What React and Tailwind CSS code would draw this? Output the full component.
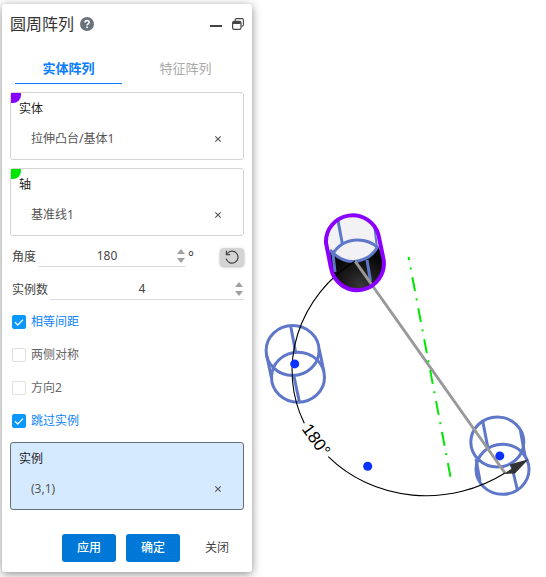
import React, { useState } from "react";

const HelpIcon = () => (
    <svg viewBox="0 0 14 14" className="h-3.5 w-3.5">
        <circle cx="7" cy="7" r="7" fill="#6a737b" />
        <path d="M5 5.6C5 4.3 5.8 3.6 7 3.6s2.1.7 2.1 1.8c0 1.5-2 1.5-2 3" fill="none" stroke="#fff" strokeWidth="1.6" />
        <rect x="6.3" y="9.5" width="1.6" height="1.6" fill="#fff" />
    </svg>
);

const RestoreIcon = () => (
    <svg viewBox="0 0 12 12" className="h-3 w-3" fill="none" stroke="#444">
        <path d="M3.2 3V2Q3.2.6 4.6.6H10Q11.4.6 11.4 2V6.8Q11.4 8.2 10 8.2H9.2" strokeWidth="1.1" />
        <rect x=".6" y="3.4" width="8.4" height="8" rx="1.6" strokeWidth="1.2" />
        <path d="M1 4.8H8.6" strokeWidth="2.4" />
    </svg>
);

const ReverseIcon = () => (
    <svg viewBox="0 0 14 14" className="h-3.5 w-3.5" fill="none" stroke="#444" strokeWidth="1.2">
        <path d="M2.2 3.6A6 6 0 1 1 1.2 8.6" />
        <path d="M1.4 .8V4.6H5.2" />
    </svg>
);

const SelectionBox = ({ label, item, color, active }) => (
    <section
        className={
            active
                ? "relative rounded-[3px] border border-[#67707a] bg-[#d5e9ff] px-2 pt-2 pb-2.5"
                : "relative rounded-[3px] border border-[#d4d4d4] bg-white px-2 pt-2 pb-2.5"
        }
    >
        {color && <span className={`absolute top-0 left-0 h-2.5 w-2.5 rounded-br-lg ${color}`} />}
        <h2 className="text-xs leading-4 text-[#222]">{label}</h2>
        <div className="mt-3 flex h-5 items-center justify-between px-3 text-xs text-[#555]">
            <span>{item}</span>
            <button aria-label={`移除 ${item}`} className="flex h-4 w-2.5 items-center justify-center">
                <svg viewBox="0 0 10 10" className="h-2.5 w-2.5" stroke="#555" strokeWidth="1.1">
                    <path d="M2.3 2.3L7.7 7.7M7.7 2.3L2.3 7.7" />
                </svg>
            </button>
        </div>
    </section>
);

const NumberField = ({ id, label, value, onChange, children }) => (
    <div className="flex h-[33px] items-center pl-0.5">
        <label htmlFor={id} className="mr-0.5 shrink-0 text-xs text-[#444]">{label}</label>
        <div className="flex h-[21px] min-w-0 flex-1 items-center border-b border-[#d9dce3]">
            <input
                id={id}
                inputMode="numeric"
                value={value}
                onChange={(e) => onChange(Number(e.target.value) || 0)}
                className="w-full min-w-0 flex-1 bg-transparent text-center text-xs text-[#444] outline-none"
            />
            <div className="flex w-2.5 flex-col items-center gap-1">
                <button aria-label={`${label} +`} onClick={() => onChange(value + 1)}>
                    <svg viewBox="0 0 10 5" className="h-[5px] w-2.5" fill="#a0a0a0"><path d="M5 0L9 5H1Z" /></svg>
                </button>
                <button aria-label={`${label} -`} onClick={() => onChange(value - 1)}>
                    <svg viewBox="0 0 10 5" className="h-[5px] w-2.5" fill="#a0a0a0"><path d="M1 0H9L5 5Z" /></svg>
                </button>
            </div>
        </div>
        {children}
    </div>
);

const Option = ({ label, defaultChecked = false }) => {
    const [checked, setChecked] = useState(defaultChecked);

    return (
        <label className="flex h-[33px] items-center gap-[5px] pb-px pl-0.5 text-xs">
            <span className="grid h-3.5 w-3.5">
                <input
                    type="checkbox"
                    checked={checked}
                    onChange={(e) => setChecked(e.target.checked)}
                    className="col-start-1 row-start-1 h-3.5 w-3.5 appearance-none rounded-[2px] border border-[#dcdde6] bg-white checked:border-[#0a98ff] checked:bg-[#0a98ff]"
                />
                {checked && (
                    <svg viewBox="0 0 14 14" className="pointer-events-none col-start-1 row-start-1 h-3.5 w-3.5" fill="none" stroke="#fff" strokeWidth="1.3">
                        <path d="M3 7.2L5.8 10L11 4.6" />
                    </svg>
                )}
            </span>
            <span className={checked ? "text-[#0a84ff]" : "text-[#666]"}>{label}</span>
        </label>
    );
};

const Scene = () => (
    <svg viewBox="252 0 294 577" className="h-auto w-full" fill="none">
        <defs>
            <radialGradient id="body" cx="361" cy="286" r="34" gradientUnits="userSpaceOnUse">
                <stop offset="0" stopColor="#383838" />
                <stop offset=".5" stopColor="#1c1c1c" />
                <stop offset="1" stopColor="#050505" />
            </radialGradient>
        </defs>

        {/* source body */}
        <path d="M326 243A26.700 26.300 0 0 1 378.500 235L383.500 259A26.500 26.500 0 0 1 331 268Z" fill="#f2f2f4" />
        <path d="M330 250Q341 262 354 261.500Q371 260 378 246L383.500 259A26.500 26.500 0 0 1 331 268Z" fill="url(#body)" />
        <g stroke="#5f77c8" strokeWidth="3">
            <path d="M337.500 218L342.300 243.500M367 260L370.500 281M333 254L335 272" />
            <path d="M374.500 228L377 248" strokeWidth="2" />
            <path d="M332 255Q341 240 357.500 240Q370 240 378 248" />
            <path d="M330 250Q341 262 354 261.500Q371 260 378 246" />
        </g>

        {/* previews */}
        <g stroke="#5f77c8" strokeWidth="3">
            <ellipse cx="292.600" cy="350.500" rx="26.500" ry="25" />
            <ellipse cx="298" cy="377.200" rx="26.500" ry="25" />
            <path d="M290.700 326L295.700 352.700M293.700 375L299.300 401.500" />
            <path d="M266.800 356L271.500 378M319.200 349L323.800 371" />
            <ellipse cx="497.300" cy="442" rx="26.500" ry="25" />
            <ellipse cx="502.500" cy="469.300" rx="26.500" ry="25" />
            <path d="M482.700 421L488.300 450M511.700 466L517.300 489.500" />
            <path d="M520.500 431L525 456M476 459L480 481" />
        </g>

        <path d="M355 261L505 473" stroke="#999" strokeWidth="3" />
        <path d="M450.500 476.700L408.500 257" stroke="#00e600" strokeWidth="2" strokeDasharray="14 8 2 7.500" />

        {/* angle dimension */}
        <path
            d="M355 261A138.400 128.300 -11.200 0 0 304.300 423.300M328.300 456.700A138.400 128.300 -11.200 0 0 505 473"
            stroke="#000"
            strokeWidth="1.100"
        />
        <path d="M528.500 459.200L509.500 464.500L512 468.500L503.500 474L515 473.500Z" fill="#333" />
        <text
            x="316"
            y="440"
            textAnchor="middle"
            dominantBaseline="central"
            transform="rotate(54 316 440)"
            className="fill-black font-['Liberation_Sans',sans-serif] text-[17px]"
        >
            180°
        </text>

        <path
            d="M326 243A26.700 26.300 0 0 1 378.500 235L383.500 259A26.500 26.500 0 0 1 331 268Z"
            stroke="#8a00ff"
            strokeWidth="4"
        />
        <g fill="#0a32ff">
            <circle cx="294.700" cy="363.900" r="4.500" />
            <circle cx="499.800" cy="455.900" r="4.500" />
            <circle cx="367.700" cy="466.200" r="4.500" />
        </g>
    </svg>
);

const App = () => {
    const [tab, setTab] = useState("body");
    const [angle, setAngle] = useState(180);
    const [count, setCount] = useState(4);

    const tabs = [
        { id: "body", name: "实体阵列" },
        { id: "feature", name: "特征阵列" },
    ];

    return (
        <main className="flex items-start bg-white font-['Noto_Sans','Noto_Sans_CJK_SC',sans-serif]">
            <aside className="mt-1 ml-0.5 w-[250px] shrink-0 rounded-[3px] bg-white px-2 pb-2.5 shadow-[0_2px_10px_rgba(0,0,0,0.45)]">
                <header className="flex h-10 items-center">
                    <h1 className="text-base text-[#333]">圆周阵列</h1>
                    <button aria-label="帮助" className="ml-1.5"><HelpIcon /></button>
                    <button aria-label="最小化" className="ml-auto flex h-4 w-3 items-center justify-center">
                        <svg viewBox="0 0 12 12" className="h-3 w-3"><path d="M0 8H12" stroke="#444" strokeWidth="2" /></svg>
                    </button>
                    <button aria-label="还原" className="ml-2.5"><RestoreIcon /></button>
                </header>

                <nav className="flex">
                    {tabs.map((t) => (
                        <button
                            key={t.id}
                            onClick={() => setTab(t.id)}
                            className={
                                tab === t.id
                                    ? "mx-[5px] h-10 flex-1 border-b border-[#0a7cff] pt-2.5 text-[13px] font-bold text-[#0a7cff]"
                                    : "mx-[5px] h-10 flex-1 border-b border-transparent pt-2.5 text-[13px] text-[#aaa]"
                            }
                        >
                            {t.name}
                        </button>
                    ))}
                </nav>

                <div className="mt-2 flex flex-col gap-2">
                    <SelectionBox label="实体" item="拉伸凸台/基体1" color="bg-[#8a00ff]" />
                    <SelectionBox label="轴" item="基准线1" color="bg-[#00e600]" />
                </div>

                <div className="my-1">
                    <NumberField id="angle" label="角度" value={angle} onChange={setAngle}>
                        <span className="ml-0.5 w-8 text-sm text-[#444]">°</span>
                        <button aria-label="反向" className="flex h-[18px] w-6 items-center justify-center rounded bg-[#d4d4d4] shadow-[0_1px_3px_rgba(0,0,0,0.3)]">
                            <ReverseIcon />
                        </button>
                    </NumberField>
                    <NumberField id="count" label="实例数" value={count} onChange={setCount} />
                    <Option label="相等间距" defaultChecked />
                    <Option label="两侧对称" />
                    <Option label="方向2" />
                    <Option label="跳过实例" defaultChecked />
                </div>

                <SelectionBox label="实例" item="(3,1)" active />

                <footer className="mt-6 flex justify-end gap-2.5 text-xs">
                    <button className="h-7 w-[54px] rounded-[3px] bg-[#0078d7] font-medium text-white">应用</button>
                    <button className="h-7 w-[54px] rounded-[3px] bg-[#0078d7] font-medium text-white">确定</button>
                    <button className="h-7 w-[54px] text-[#444]">关闭</button>
                </footer>
            </aside>

            <div className="min-w-0 flex-1">
                <Scene />
            </div>
        </main>
    );
};

export default App;
